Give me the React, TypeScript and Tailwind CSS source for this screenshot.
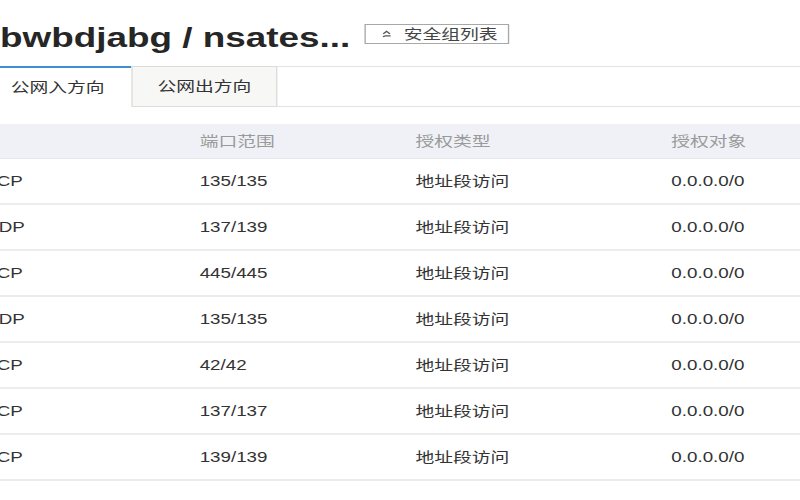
import React from "react"

const rows = [
  { proto: "TCP", port: "135/135" },
  { proto: "UDP", port: "137/139" },
  { proto: "TCP", port: "445/445" },
  { proto: "UDP", port: "135/135" },
  { proto: "TCP", port: "42/42" },
  { proto: "TCP", port: "137/137" },
  { proto: "TCP", port: "139/139" },
]

const font = "font-['Liberation_Sans','Noto_Sans_CJK_SC',sans-serif]"

function BackIcon() {
  return (
    <svg width="7" height="8" viewBox="0 0 7 8" fill="none" stroke="#555" strokeWidth="1.2">
      <path d="M1 3.8 L3.5 1.3 L6 3.8" />
      <path d="M1 7 Q1.5 5.6 3 5.8 L6.5 5.8" />
    </svg>
  )
}

export default function App() {
  return (
    <div className={`w-[800px] h-[500px] overflow-hidden bg-white ${font}`}>
      {/* the source shot is stretched sideways, so the page is drawn narrow and widened */}
      <div className="w-[597px] origin-top-left scale-x-[1.34]">
        <div className="flex items-start pt-[22px]">
          <h1 className="text-[27.5px] font-bold leading-[32px] text-[#262626] whitespace-nowrap">
            bwbdjabg / nsates...
          </h1>
          <button className="ml-[11px] mt-[2px] flex h-[20px] items-center border border-[#a8a8a8] bg-white pl-[12px] pr-[8px] text-[14px] leading-none text-[#444]">
            <BackIcon />
            <span className="ml-[9px]">安全组列表</span>
          </button>
        </div>

        <div className="-ml-[12px] mt-[12px] flex h-[41px] text-[14px] text-[#333]">
          <div className="flex w-[110px] items-center justify-center border-t-2 border-[#3d8ed2] bg-white">
            公网入方向
          </div>
          <div className="flex w-[109px] items-center justify-center border border-[#dcdcdc] bg-[#f7f7f5]">
            公网出方向
          </div>
          <div className="flex-1 border-y border-[#e3e3e3]" />
        </div>

        <div className="-ml-[11px] mt-[17px] text-[14px]">
          <div className="grid h-[35px] grid-cols-[160px_161px_191px_1fr] items-center border-b border-[#e4e7ec] bg-[#eff1f6] text-[#9a9a9a]">
            <div />
            <div>端口范围</div>
            <div>授权类型</div>
            <div>授权对象</div>
          </div>
          {rows.map((r, i) => (
            <div
              key={i}
              className="grid h-[46px] grid-cols-[160px_161px_191px_1fr] items-center border-b-2 border-[#ececec] text-[#333]"
            >
              <div>{r.proto}</div>
              <div>{r.port}</div>
              <div>地址段访问</div>
              <div>0.0.0.0/0</div>
            </div>
          ))}
        </div>
      </div>
    </div>
  )
}
